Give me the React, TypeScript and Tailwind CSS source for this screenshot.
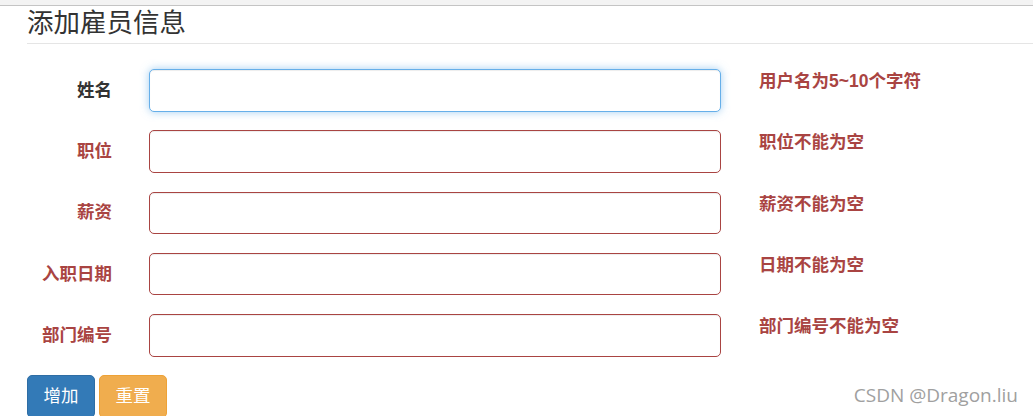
import React from "react";

const rows = [
  { label: "姓名", msg: "用户名为5~10个字符", ok: true },
  { label: "职位", msg: "职位不能为空", ok: false },
  { label: "薪资", msg: "薪资不能为空", ok: false },
  { label: "入职日期", msg: "日期不能为空", ok: false },
  { label: "部门编号", msg: "部门编号不能为空", ok: false },
];

export default function App() {
  return (
    <div
      className="relative w-[1033px] h-[416px] overflow-hidden bg-white text-[#333]"
      style={{ fontFamily: '"Liberation Sans", "Noto Sans CJK SC", sans-serif' }}
    >
      <div className="h-[5px] bg-[#f3f3f3] border-b border-[#c4c4c4] box-content" />
      <div className="pl-[27px]">
        <div className="pt-[3px] pb-[5px] border-b border-[#e5e5e5]">
          <h3 className="text-[26.5px] leading-[29px] font-normal text-[#333]">添加雇员信息</h3>
        </div>
        <form className="mt-[25px] flex flex-col gap-[18.75px]">
          {rows.map((r) => (
            <div key={r.label} className="flex items-start">
              <label
                className={`w-[85px] shrink-0 text-right font-bold text-[17.5px] leading-[25px] pt-[8.75px] ${
                  r.ok ? "text-[#333]" : "text-[#a94442]"
                }`}
              >
                {r.label}
              </label>
              <input
                type="text"
                className={`ml-[37px] w-[572px] h-[42.5px] rounded-[5px] border bg-white outline-none ${
                  r.ok
                    ? "border-[#66afe9] shadow-[inset_0_1px_1px_rgba(0,0,0,0.075),0_0_8px_rgba(102,175,233,0.6)]"
                    : "border-[#a94442] shadow-[inset_0_1px_1px_rgba(0,0,0,0.075)]"
                }`}
              />
              <span className="ml-[38px] font-bold text-[17.5px] leading-[25px] text-[#a94442]">
                {r.msg}
              </span>
            </div>
          ))}
          <div className="flex gap-[4px] mt-[0px]">
            <button
              type="button"
              className="w-[68px] h-[42.5px] rounded-[5px] border border-[#2e6da4] bg-[#337ab7] text-white text-[17.5px] leading-[25px]"
            >
              增加
            </button>
            <button
              type="button"
              className="w-[68px] h-[42.5px] rounded-[5px] border border-[#eea236] bg-[#f0ad4e] text-white text-[17.5px] leading-[25px]"
            >
              重置
            </button>
          </div>
        </form>
      </div>
      <div
        className="absolute right-[15px] top-[382px] text-[19px] leading-[26px] text-[#a0a0a0]"
        style={{ fontFamily: '"Open Sans", sans-serif' }}
      >
        CSDN @Dragon.liu
      </div>
    </div>
  );
}
